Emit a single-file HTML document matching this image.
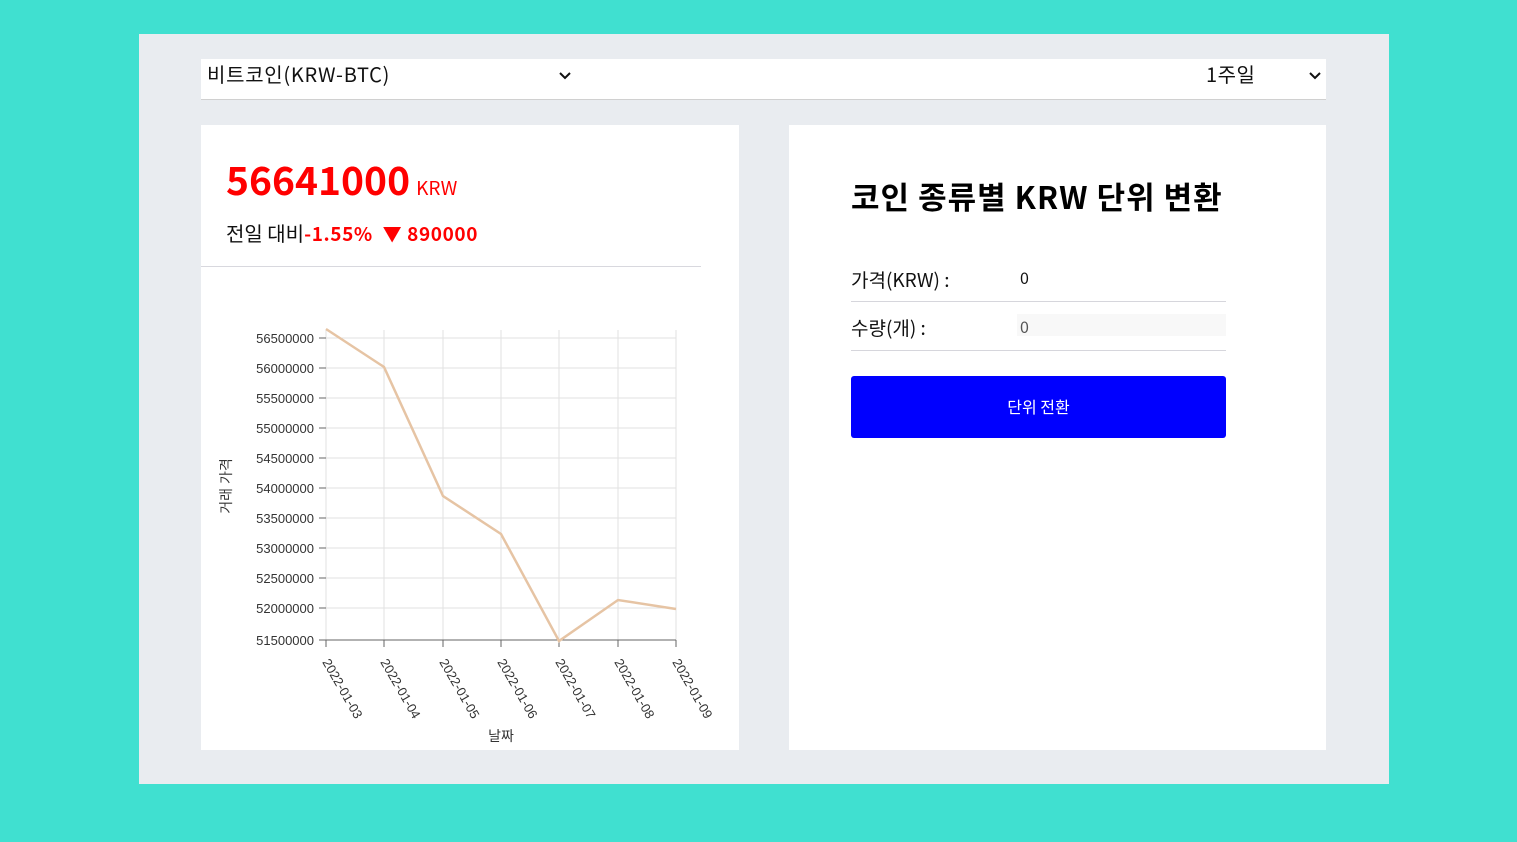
<!DOCTYPE html>
<html><head><meta charset="utf-8"><style>
body{margin:0;width:1517px;height:842px;background:#40e0d0;font-family:"Liberation Sans","Noto Sans CJK KR",sans-serif;position:relative;overflow:hidden}
.wrap{position:absolute;left:139px;top:34px;width:1250px;height:750px;background:#e9ecf0}
.sel{position:absolute;left:201px;top:59px;width:1125px;height:40px;background:#fff;border-bottom:1px solid #d0d0d0;font-size:20px;color:#111}
.card{position:absolute;background:#fff}
.k{font-family:"Noto Sans CJK KR","Liberation Sans",sans-serif}
</style></head><body>
<div class="wrap"></div>
<div class="sel">
<span class="k" style="position:absolute;left:6px;top:0px;font-size:20px;letter-spacing:0.7px">비트코인(KRW-BTC)</span>
<svg style="position:absolute;left:358px;top:11px" width="12" height="10"><path d="M1 3l5 5 5-5" stroke="#111" stroke-width="2" fill="none"/></svg>
<span class="k" style="position:absolute;left:1005px;top:0px;font-size:20px;letter-spacing:0.5px">1주일</span>
<svg style="position:absolute;left:1108px;top:11px" width="12" height="10"><path d="M1 3l5 5 5-5" stroke="#111" stroke-width="2" fill="none"/></svg>
</div>
<div class="card" style="left:201px;top:125px;width:538px;height:625px">
<div class="k" style="position:absolute;left:25px;top:26px;color:#f00;font-weight:bold;font-size:39px;line-height:56px">56641000<span style="font-size:19px;font-weight:normal;margin-left:6px">KRW</span></div>
<div class="k" style="position:absolute;left:25px;top:93px;font-size:20px;line-height:30px;color:#111">전일 대비<b style="color:#f00;font-size:19px;letter-spacing:0.6px">-1.55% &nbsp;▼ 890000</b></div>
<div style="position:absolute;left:0;top:141px;width:500px;height:1px;background:#d8d8de"></div>
</div>
<svg style="position:absolute;left:201px;top:260px" width="538" height="490" font-family="Liberation Sans, Noto Sans CJK KR, sans-serif" font-size="13" fill="#333">
<g transform="translate(-201,-260)">
<g stroke="#e2e2e2" stroke-width="1">
<line x1="326" y1="330" x2="326" y2="640"/><line x1="384" y1="330" x2="384" y2="640"/><line x1="443" y1="330" x2="443" y2="640"/><line x1="501" y1="330" x2="501" y2="640"/><line x1="559" y1="330" x2="559" y2="640"/><line x1="618" y1="330" x2="618" y2="640"/><line x1="676" y1="330" x2="676" y2="640"/>
<line x1="326" y1="338" x2="676" y2="338"/><line x1="326" y1="368" x2="676" y2="368"/><line x1="326" y1="398" x2="676" y2="398"/><line x1="326" y1="428" x2="676" y2="428"/><line x1="326" y1="458" x2="676" y2="458"/><line x1="326" y1="488" x2="676" y2="488"/><line x1="326" y1="518" x2="676" y2="518"/><line x1="326" y1="548" x2="676" y2="548"/><line x1="326" y1="578" x2="676" y2="578"/><line x1="326" y1="608" x2="676" y2="608"/>
</g>
<g stroke="#666"><line x1="326" y1="640" x2="676" y2="640"/>
<line x1="319" y1="338" x2="326" y2="338"/><line x1="319" y1="368" x2="326" y2="368"/><line x1="319" y1="398" x2="326" y2="398"/><line x1="319" y1="428" x2="326" y2="428"/><line x1="319" y1="458" x2="326" y2="458"/><line x1="319" y1="488" x2="326" y2="488"/><line x1="319" y1="518" x2="326" y2="518"/><line x1="319" y1="548" x2="326" y2="548"/><line x1="319" y1="578" x2="326" y2="578"/><line x1="319" y1="608" x2="326" y2="608"/><line x1="319" y1="640" x2="326" y2="640"/>
<line x1="326" y1="640" x2="326" y2="647"/><line x1="384" y1="640" x2="384" y2="647"/><line x1="443" y1="640" x2="443" y2="647"/><line x1="501" y1="640" x2="501" y2="647"/><line x1="559" y1="640" x2="559" y2="647"/><line x1="618" y1="640" x2="618" y2="647"/><line x1="676" y1="640" x2="676" y2="647"/></g>
<g text-anchor="end"><text x="314" y="343">56500000</text><text x="314" y="373">56000000</text><text x="314" y="403">55500000</text><text x="314" y="433">55000000</text><text x="314" y="463">54500000</text><text x="314" y="493">54000000</text><text x="314" y="523">53500000</text><text x="314" y="553">53000000</text><text x="314" y="583">52500000</text><text x="314" y="613">52000000</text><text x="314" y="645">51500000</text></g>
<g><text transform="translate(322,662) rotate(60)">2022-01-03</text><text transform="translate(380,662) rotate(60)">2022-01-04</text><text transform="translate(439,662) rotate(60)">2022-01-05</text><text transform="translate(497,662) rotate(60)">2022-01-06</text><text transform="translate(555,662) rotate(60)">2022-01-07</text><text transform="translate(614,662) rotate(60)">2022-01-08</text><text transform="translate(672,662) rotate(60)">2022-01-09</text></g>
<text x="501" y="741" text-anchor="middle" font-size="14">날짜</text>
<text transform="translate(231,486) rotate(-90)" text-anchor="middle" font-size="14">거래 가격</text>
<polyline points="326,329 384,367 443,496 501,534 559,641 618,600 676,609" fill="none" stroke="#e6c4a4" stroke-width="2.5"/>
</g></svg>
<div class="card" style="left:789px;top:125px;width:537px;height:625px">
<div class="k" style="position:absolute;left:62px;top:50px;font-size:31px;font-weight:bold;color:#000;line-height:42px;letter-spacing:1px">코인 종류별 KRW 단위 변환</div>
<div class="k" style="position:absolute;left:62px;top:141px;font-size:19px;color:#111">가격(KRW) :</div>
<div class="k" style="position:absolute;left:231px;top:140px;font-size:16px;color:#111">0</div>
<div style="position:absolute;left:62px;top:176px;width:375px;height:1px;background:#d6d6dc"></div>
<div style="position:absolute;left:228px;top:189px;width:209px;height:22px;background:#f8f8f8"></div>
<div class="k" style="position:absolute;left:62px;top:189px;font-size:19px;color:#111">수량(개) :</div>
<div class="k" style="position:absolute;left:231px;top:189px;font-size:16px;color:#555">0</div>
<div style="position:absolute;left:62px;top:225px;width:375px;height:1px;background:#d6d6dc"></div>
<div class="k" style="position:absolute;left:62px;top:251px;width:375px;height:62px;background:#0000ff;border-radius:3px;color:#fff;font-size:16px;line-height:60px;text-align:center">단위 전환</div>
</div>
</body></html>
